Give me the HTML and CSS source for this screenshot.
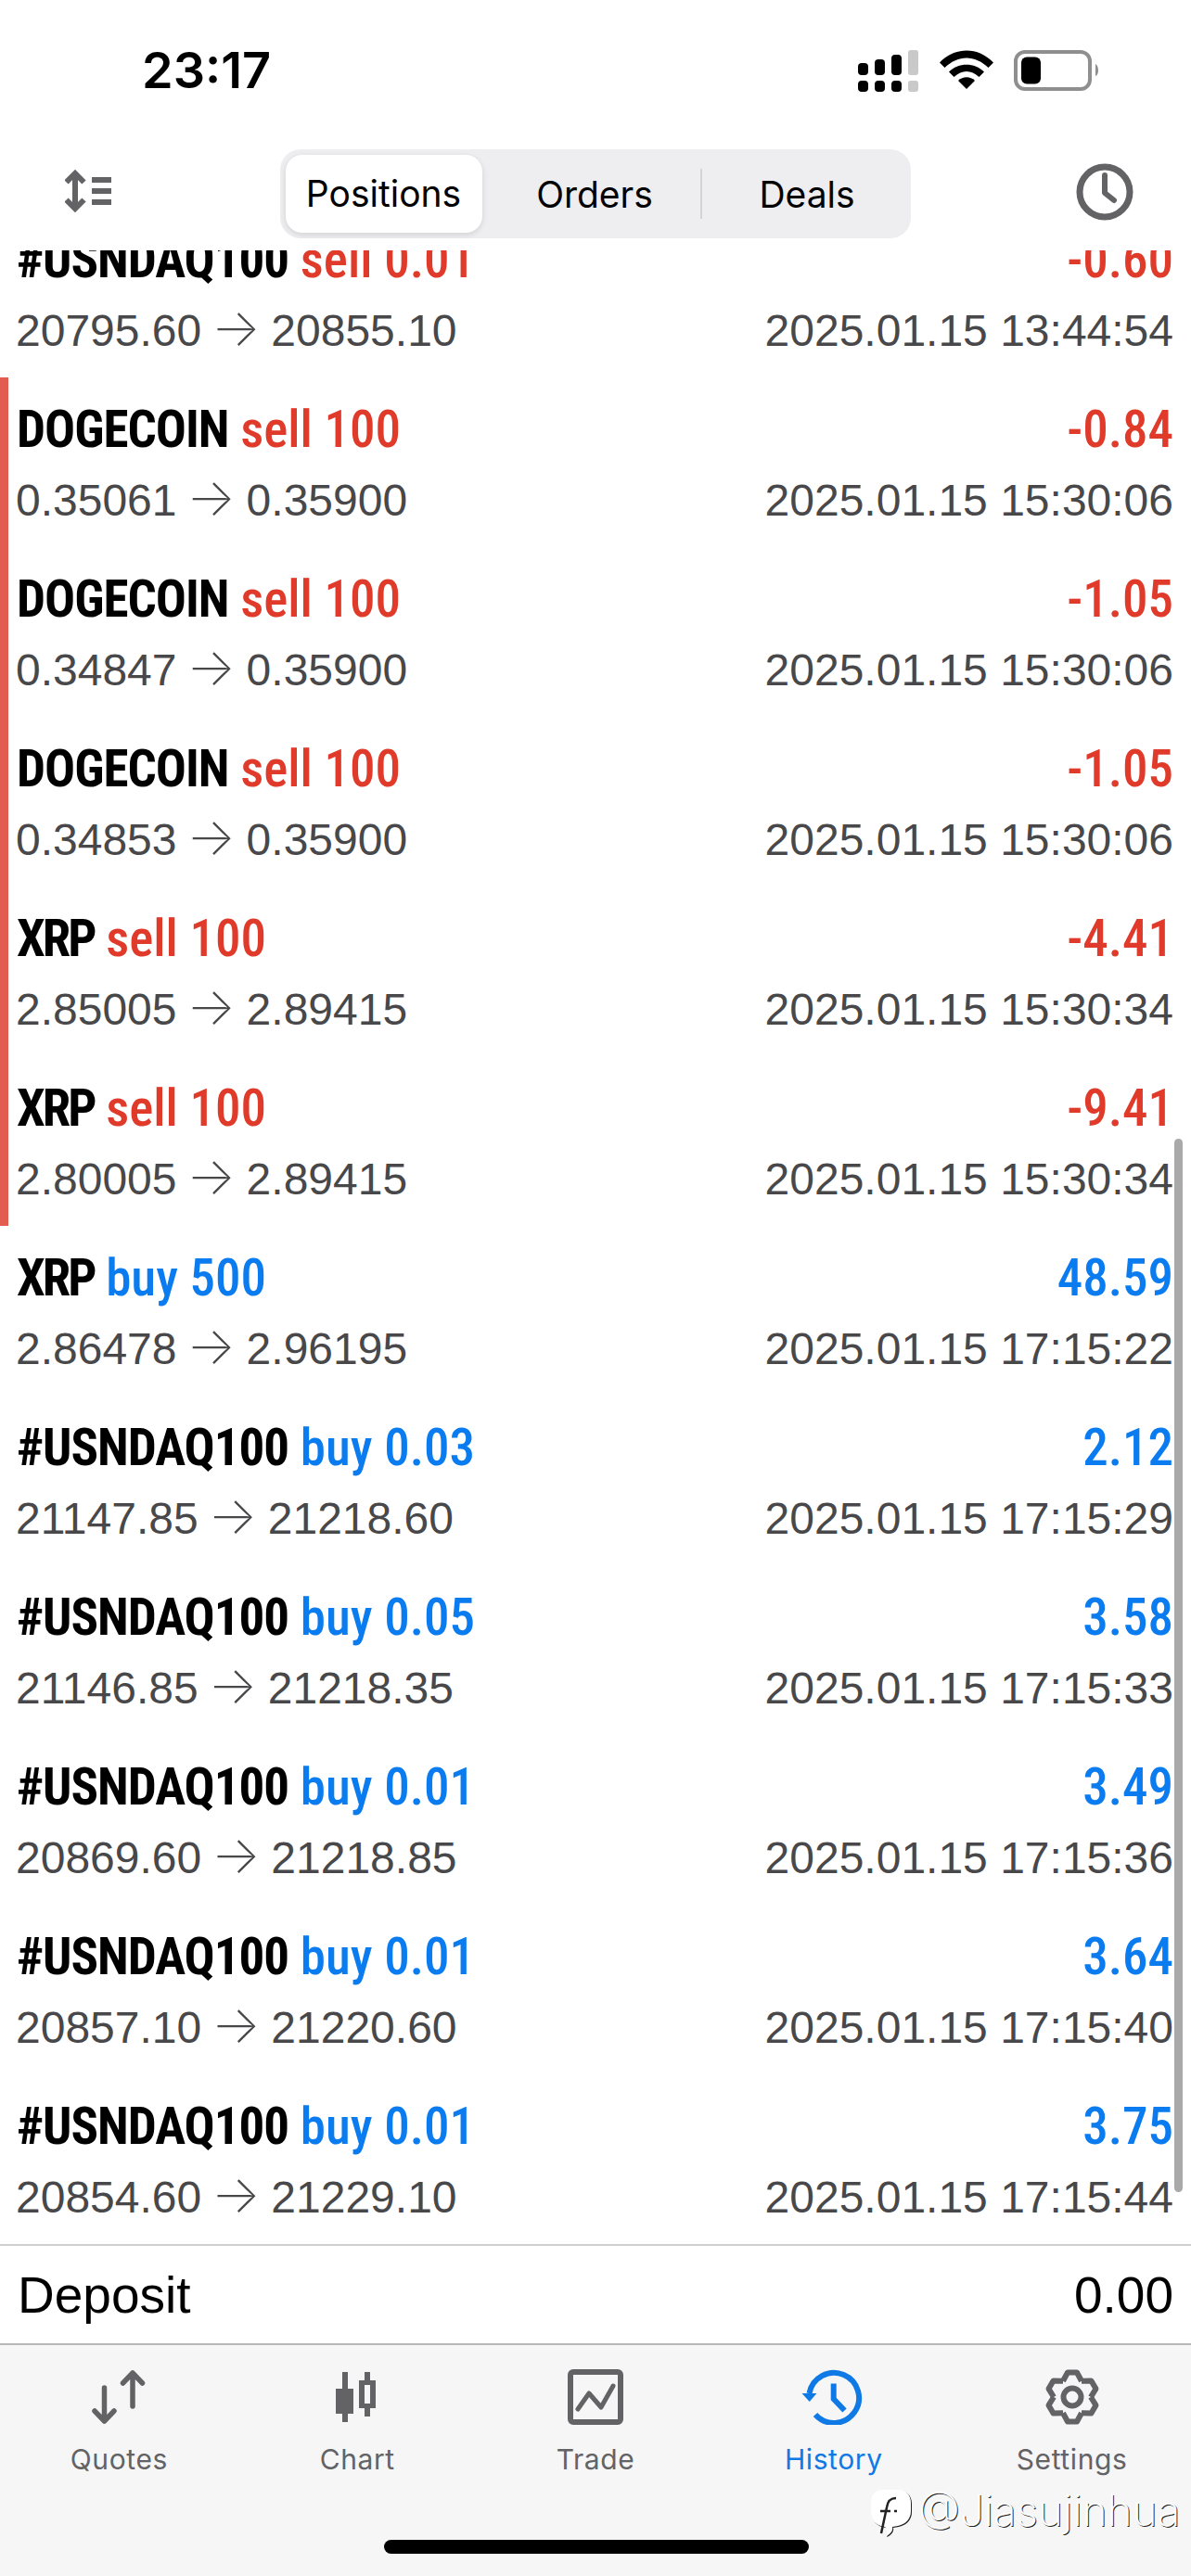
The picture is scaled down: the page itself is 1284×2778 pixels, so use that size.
FILE: index.html
```html
<!DOCTYPE html>
<html lang="en">
<head>
    <meta charset="UTF-8">
    <meta name="viewport" content="width=device-width, initial-scale=1.0">
    <title>History</title>
    <link rel="stylesheet" href="styles.css">
</head>
<body>

<div class="phone">

    <div class="status-bar">
        <span class="clock-time">23:17</span>
        <div class="status-icons">
            <svg class="signal" width="66" height="46" viewBox="0 0 66 46">
                <rect x="0" y="14" width="11" height="13" rx="4"/>
                <rect x="18" y="10" width="11" height="17" rx="4"/>
                <rect x="36" y="5" width="11" height="22" rx="4"/>
                <rect class="dim" x="54" y="0" width="11" height="27" rx="3"/>
                <rect x="0" y="33" width="11" height="12" rx="4"/>
                <rect x="18" y="33" width="11" height="12" rx="4"/>
                <rect x="36" y="33" width="11" height="12" rx="4"/>
                <rect class="dim" x="54" y="33" width="11" height="12" rx="3"/>
            </svg>
            <svg class="wifi" width="58" height="42" viewBox="0 0 58 42">
                <path d="M0 13.5 C16 -4 42 -4 58 13.5 L52.500 19 C38 5 20 5 5.500 19 Z"/>
                <path d="M10 23.500 C20 13 38 13 48 23.500 L42.500 29 C34 21 24 21 15.500 29 Z"/>
                <path d="M20 33 C25 28 33 28 38 33 L29 42 Z"/>
            </svg>
            <svg class="battery" width="94" height="44" viewBox="0 0 94 44">
                <rect class="battery-shell" x="2" y="2" width="80" height="40" rx="10"/>
                <rect x="8" y="7.500" width="21" height="29" rx="6"/>
                <path class="battery-nub" d="M88 15 C92 17 92 27 88 28 Z"/>
            </svg>
        </div>
    </div>

    <div class="nav-bar">
        <svg class="nav-icon" width="52" height="46" viewBox="0 0 52 46">
            <path class="line" d="M1.500 13.500 L11 4 L20.500 13.500 M11 4 V42 M1.500 32.500 L11 42 L20.500 32.500" stroke-width="6"/>
            <rect x="29" y="8" width="21" height="6"/>
            <rect x="29" y="20" width="21" height="6"/>
            <rect x="29" y="32" width="21" height="6"/>
        </svg>
        <div class="segments">
            <div class="segment active">Positions</div>
            <div class="segment">Orders</div>
            <div class="divider"></div>
            <div class="segment">Deals</div>
        </div>
        <svg class="nav-icon" width="62" height="62" viewBox="0 0 62 62">
            <circle class="line" cx="31" cy="31" r="27" stroke-width="7"/>
            <path class="line" d="M31 13 V32 L41 40" stroke-width="6" stroke-linecap="round" stroke-linejoin="round"/>
        </svg>
    </div>

    <div class="list">
        <div class="rows">
            <div class="row">
                <div class="line-top"><span class="title"><b>#USNDAQ100</b> <span class="sell">sell 0.01</span></span><span class="profit sell">-0.60</span></div>
                <div class="line-bottom"><span>20795.60 <span class="arr">→</span> 20855.10</span><span>2025.01.15 13:44:54</span></div>
            </div>
            <div class="row marked">
                <div class="line-top"><span class="title"><b>DOGECOIN</b> <span class="sell">sell 100</span></span><span class="profit sell">-0.84</span></div>
                <div class="line-bottom"><span>0.35061 <span class="arr">→</span> 0.35900</span><span>2025.01.15 15:30:06</span></div>
            </div>
            <div class="row marked">
                <div class="line-top"><span class="title"><b>DOGECOIN</b> <span class="sell">sell 100</span></span><span class="profit sell">-1.05</span></div>
                <div class="line-bottom"><span>0.34847 <span class="arr">→</span> 0.35900</span><span>2025.01.15 15:30:06</span></div>
            </div>
            <div class="row marked">
                <div class="line-top"><span class="title"><b>DOGECOIN</b> <span class="sell">sell 100</span></span><span class="profit sell">-1.05</span></div>
                <div class="line-bottom"><span>0.34853 <span class="arr">→</span> 0.35900</span><span>2025.01.15 15:30:06</span></div>
            </div>
            <div class="row marked">
                <div class="line-top"><span class="title"><b class="tight">XRP</b> <span class="sell">sell 100</span></span><span class="profit sell">-4.41</span></div>
                <div class="line-bottom"><span>2.85005 <span class="arr">→</span> 2.89415</span><span>2025.01.15 15:30:34</span></div>
            </div>
            <div class="row marked">
                <div class="line-top"><span class="title"><b class="tight">XRP</b> <span class="sell">sell 100</span></span><span class="profit sell">-9.41</span></div>
                <div class="line-bottom"><span>2.80005 <span class="arr">→</span> 2.89415</span><span>2025.01.15 15:30:34</span></div>
            </div>
            <div class="row">
                <div class="line-top"><span class="title"><b class="tight">XRP</b> <span class="buy">buy 500</span></span><span class="profit buy">48.59</span></div>
                <div class="line-bottom"><span>2.86478 <span class="arr">→</span> 2.96195</span><span>2025.01.15 17:15:22</span></div>
            </div>
            <div class="row">
                <div class="line-top"><span class="title"><b>#USNDAQ100</b> <span class="buy">buy 0.03</span></span><span class="profit buy">2.12</span></div>
                <div class="line-bottom"><span>21147.85 <span class="arr">→</span> 21218.60</span><span>2025.01.15 17:15:29</span></div>
            </div>
            <div class="row">
                <div class="line-top"><span class="title"><b>#USNDAQ100</b> <span class="buy">buy 0.05</span></span><span class="profit buy">3.58</span></div>
                <div class="line-bottom"><span>21146.85 <span class="arr">→</span> 21218.35</span><span>2025.01.15 17:15:33</span></div>
            </div>
            <div class="row">
                <div class="line-top"><span class="title"><b>#USNDAQ100</b> <span class="buy">buy 0.01</span></span><span class="profit buy">3.49</span></div>
                <div class="line-bottom"><span>20869.60 <span class="arr">→</span> 21218.85</span><span>2025.01.15 17:15:36</span></div>
            </div>
            <div class="row">
                <div class="line-top"><span class="title"><b>#USNDAQ100</b> <span class="buy">buy 0.01</span></span><span class="profit buy">3.64</span></div>
                <div class="line-bottom"><span>20857.10 <span class="arr">→</span> 21220.60</span><span>2025.01.15 17:15:40</span></div>
            </div>
            <div class="row">
                <div class="line-top"><span class="title"><b>#USNDAQ100</b> <span class="buy">buy 0.01</span></span><span class="profit buy">3.75</span></div>
                <div class="line-bottom"><span>20854.60 <span class="arr">→</span> 21229.10</span><span>2025.01.15 17:15:44</span></div>
            </div>
        </div>
        <div class="scrollbar"></div>
    </div>

    <div class="summary">
        <span>Deposit</span>
        <span>0.00</span>
    </div>

    <div class="tab-bar">
        <div class="tab">
            <svg width="60" height="60" viewBox="0 0 60 60">
                <path class="line" d="M14.500 20 V56 M4 45 L14.500 56 L25 45 M45 40 V4 M34.500 15 L45 4 L55.500 15" stroke-width="5.500" stroke-linecap="round" stroke-linejoin="round"/>
            </svg>
            <span>Quotes</span>
        </div>
        <div class="tab">
            <svg width="60" height="60" viewBox="0 0 60 60">
                <path d="M14 3 H20 V21 H26 V48 H20 V57 H14 V48 H7 V21 H14 Z"/>
                <path fill-rule="evenodd" d="M38 3 H44 V12 H50 V42 H44 V51 H38 V42 H32 V12 H38 Z M38 17 V37 H44 V17 Z"/>
            </svg>
            <span>Chart</span>
        </div>
        <div class="tab">
            <svg width="60" height="60" viewBox="0 0 60 60">
                <rect class="line" x="3" y="3" width="54" height="54" rx="3" stroke-width="6"/>
                <path class="line" d="M11 43 L23 26 L36 41 L49 18" stroke-width="5" stroke-linecap="round" stroke-linejoin="round"/>
            </svg>
            <span>Trade</span>
        </div>
        <div class="tab current">
            <svg width="70" height="60" viewBox="-5 0 70 60">
                <path class="line" d="M3.500 26 A27 27 0 1 1 10 49" stroke-width="6"/>
                <path d="M-4.500 26 H11.500 L3.700 35 Z"/>
                <path class="line" d="M29.700 15.500 V32 L41.500 44.500" stroke-width="6"/>
            </svg>
            <span>History</span>
        </div>
        <div class="tab">
            <svg width="60" height="60" viewBox="0 0 60 60">
                <path class="line" id="tooth" d="M20 12.700 L25 3.500 H35 L40 12.700" stroke-width="6" stroke-linejoin="round"/>
                <use href="#tooth" transform="rotate(60 30 30)"/>
                <use href="#tooth" transform="rotate(120 30 30)"/>
                <use href="#tooth" transform="rotate(180 30 30)"/>
                <use href="#tooth" transform="rotate(240 30 30)"/>
                <use href="#tooth" transform="rotate(300 30 30)"/>
                <circle class="line" cx="30" cy="30" r="9.500" stroke-width="6"/>
            </svg>
            <span>Settings</span>
        </div>
    </div>

    <div class="watermark">
        <svg width="46" height="54" viewBox="0 0 46 54">
            <path class="wm-blob" d="M14 1 H30 C39 1 44 7 44 15 V24 C44 32 39 38 30 40 L24 41 C25 45 22 49 17 51 C19 47 18 43 16 41 C6 40 1 33 1 24 V15 C1 7 5 1 14 1 Z"/>
            <path class="wm-f" d="M28 10 C21 10 19 14 18 20 L12 48 M11 24 H22 M26 24 H29" stroke-width="2.500" fill="none"/>
        </svg>
        <span>@Jiasujinhua</span>
    </div>

    <div class="home-indicator"></div>
</div>

</body>
</html>
```

FILE: styles.css
```css
* {
    box-sizing: border-box;
}
body {
    margin: 0;
    background: #fff;
    font-family: 'Liberation Sans', sans-serif;
    color: #000;
}
.phone {
    position: relative;
    width: 1284px;
    height: 2778px;
    display: flex;
    flex-direction: column;
    overflow: hidden;
}

/* status bar */
.status-bar {
    height: 161px;
    flex: none;
    display: flex;
    justify-content: space-between;
    align-items: flex-start;
    padding: 50px 97px 0 153px;
}
.clock-time {
    font-family: Inter, sans-serif;
    font-weight: 600;
    font-size: 54px;
    line-height: 52px;
}
.status-icons {
    display: flex;
    align-items: flex-start;
    gap: 22px;
    padding-top: 4px;
}
.signal .dim {
    fill: #c9c9c9;
}
.battery-shell {
    fill: none;
    stroke: #8f8f8f;
    stroke-width: 4;
}
.battery-nub {
    fill: #8f8f8f;
}

/* top nav */
.nav-bar {
    height: 109px;
    flex: none;
    display: flex;
    justify-content: space-between;
    align-items: flex-start;
    padding: 0 62px 0 70px;
}
.nav-bar svg:first-child {
    margin-top: 22px;
}
.nav-bar svg:last-child {
    margin-top: 15px;
}
svg {
    fill: #636366;
    flex: none;
}
.status-icons svg {
    fill: #000;
}
.line {
    fill: none;
    stroke: #636366;
}
.segments {
    width: 680px;
    height: 96px;
    margin-left: 1px;
    background: #eeeef0;
    border-radius: 22px;
    padding: 6px;
    display: grid;
    grid-template-columns: 212px 235px 2px 1fr;
    align-items: center;
}
.segment {
    padding-left: 8px;
    text-align: center;
    font-family: Inter, sans-serif;
    font-size: 39px;
}
.segment.active {
    padding-left: 0;
    height: 84px;
    line-height: 84px;
    background: #fff;
    border-radius: 18px;
    box-shadow: 0 2px 6px rgba(0, 0, 0, 0.12);
}
.divider {
    height: 54px;
    background: #d4d4d6;
}

/* list */
.list {
    position: relative;
    flex: 1;
    overflow: hidden;
}
.rows {
    margin-top: -46px;
}
.row {
    height: 183px;
    padding: 23px 19px 0 18px;
}
.row.marked {
    box-shadow: inset 9px 0 0 #e25c4f;
}
.line-top,
.line-bottom {
    display: flex;
    justify-content: space-between;
}
.line-top {
    height: 66px;
    line-height: 66px;
    font-family: Roboto, sans-serif;
    font-stretch: 75%;
    font-size: 55px;
    font-weight: 500;
}
.line-top b {
    font-weight: 700;
    letter-spacing: -1px;
}
.line-top b.tight {
    letter-spacing: -3px;
}
.line-bottom {
    height: 72px;
    margin: 6px 0 0 -1px;
    line-height: 76px;
    font-size: 48px;
    color: #48484a;
}
.arr {
    margin: 0 -2px 0 -3px;
    font-family: Inter, sans-serif;
    font-weight: 200;
    font-size: 56px;
    line-height: 0;
}
.sell {
    color: #e03a2b;
}
.buy {
    color: #0a7cf0;
}
.scrollbar {
    position: absolute;
    right: 9px;
    top: 958px;
    width: 9px;
    height: 1136px;
    border-radius: 5px;
    background: #a9a9a9;
}

/* deposit row */
.summary {
    height: 109px;
    flex: none;
    border-top: 2px solid #d0d0d0;
    border-bottom: 2px solid #b8b8b8;
    display: flex;
    justify-content: space-between;
    align-items: center;
    padding: 0 19px;
    font-size: 55px;
}

/* bottom tabs */
.tab-bar {
    height: 249px;
    flex: none;
    background: #f6f6f6;
    display: grid;
    grid-template-columns: repeat(5, 1fr);
    padding-top: 26px;
}
.tab {
    display: flex;
    flex-direction: column;
    align-items: center;
    gap: 19px;
    font-family: Inter, sans-serif;
    font-size: 30px;
    letter-spacing: 0.600px;
    line-height: 36px;
    color: #636366;
}
.tab.current {
    color: #0f7ae5;
}
.tab.current svg {
    fill: #0f7ae5;
}
.tab.current .line {
    stroke: #0f7ae5;
}

.watermark {
    position: absolute;
    left: 938px;
    top: 2684px;
    display: flex;
    align-items: flex-start;
    gap: 6px;
    font-family: Inter, sans-serif;
    font-weight: 200;
    font-size: 46px;
    line-height: 46px;
    color: #fff;
    text-shadow: 1px 1px 0 #222;
}
.wm-blob {
    fill: #fff;
    filter: drop-shadow(1px 1px 0 #222);
}
.wm-f {
    stroke: #222;
}
.home-indicator {
    position: absolute;
    left: 414px;
    top: 2739px;
    width: 458px;
    height: 15px;
    border-radius: 8px;
    background: #000;
}
```
